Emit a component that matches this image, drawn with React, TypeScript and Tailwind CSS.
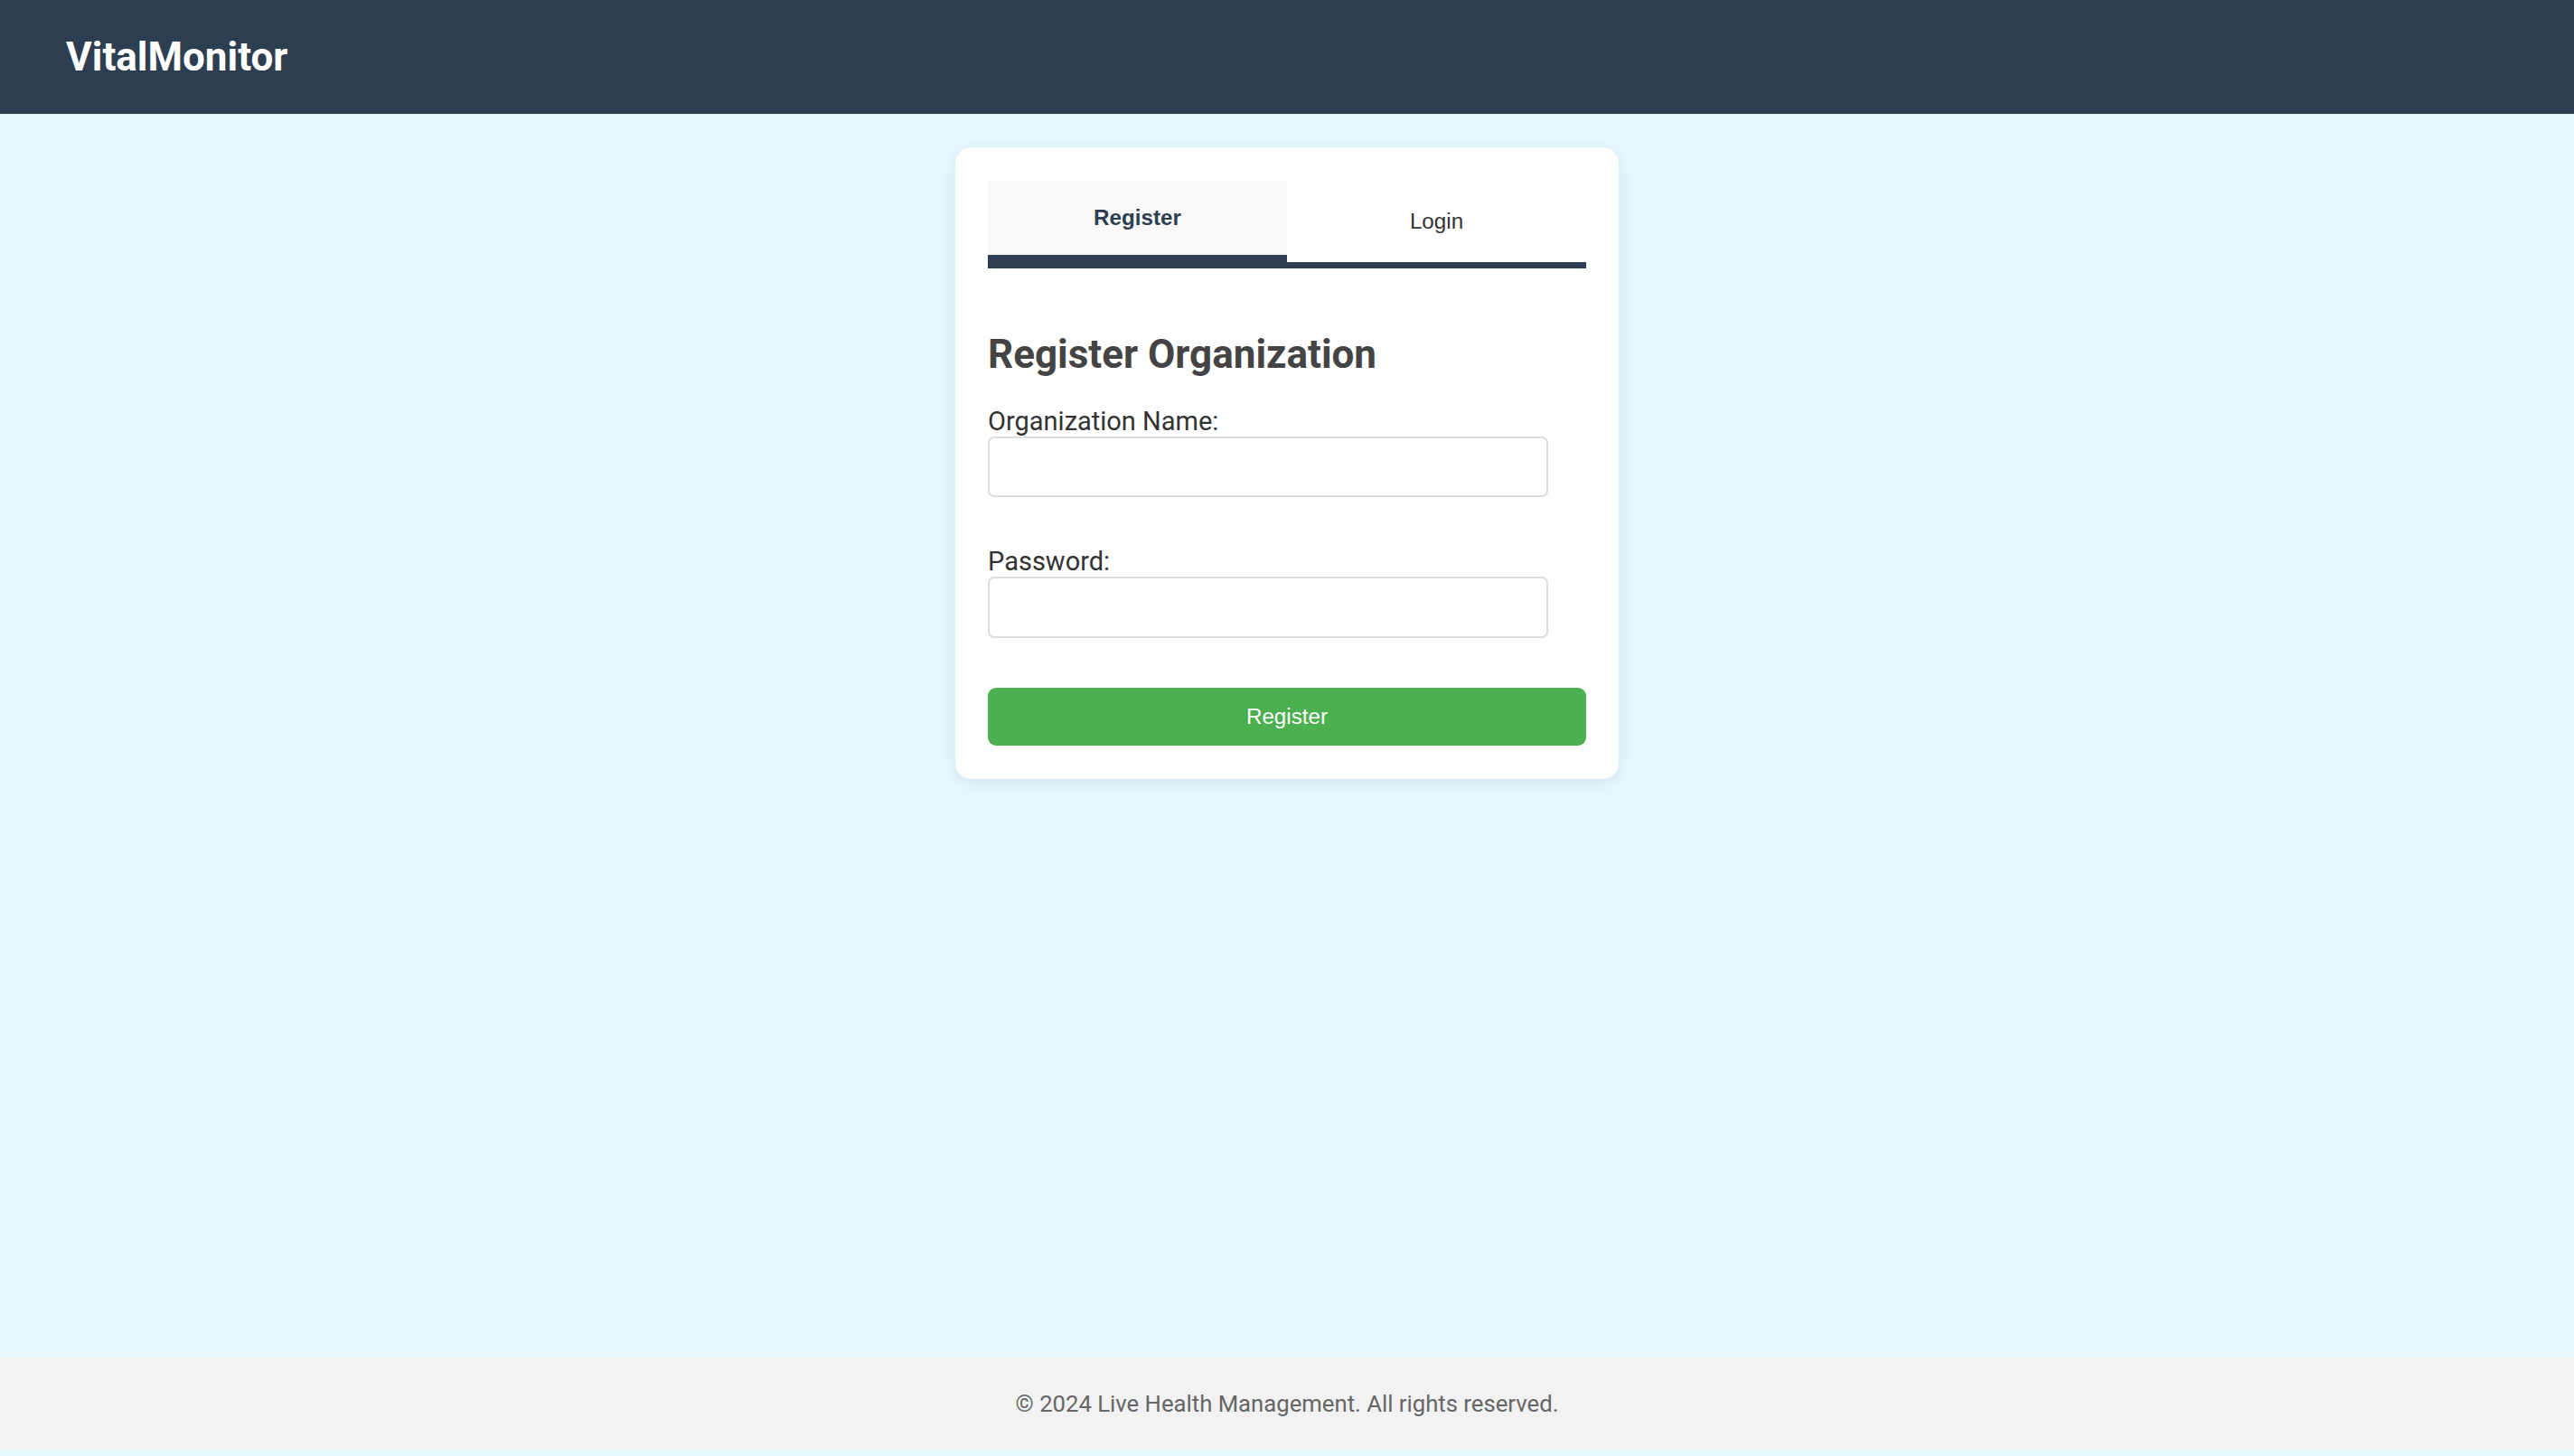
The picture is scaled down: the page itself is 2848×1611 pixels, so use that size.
import { useState } from "react";

type Tab = "register" | "login";

export default function App() {
  const [tab, setTab] = useState<Tab>("register");
  const [orgName, setOrgName] = useState("");
  const [password, setPassword] = useState("");

  return (
    <div className="flex flex-col h-[1611px] bg-[#e6f7ff] font-['Roboto',sans-serif]">
      {/* Header */}
      <header className="flex items-center h-[126px] px-[73px] bg-[#2c3e50] shrink-0">
        <h1 className="text-[44px] leading-[52px] font-bold text-white">VitalMonitor</h1>
      </header>

      {/* Main */}
      <main className="flex-1 flex justify-center pt-[37px]">
        <div className="w-[734px] h-fit bg-white rounded-[18px] px-[36px] pt-[37px] pb-[37px] shadow-[0_4px_20px_rgba(0,0,0,0.08)]">
          {/* Tabs */}
          <div className="flex border-b-[7px] border-[#2c3e50]">
            <button
              onClick={() => setTab("register")}
              className={
                tab === "register"
                  ? "flex-1 h-[90px] flex items-center justify-center bg-[#f9f9f9] border-b-[8px] border-[#2c3e50] font-['Liberation_Sans',Arial,sans-serif] text-[24.2px] font-bold text-[#2c3e50]"
                  : "flex-1 h-[90px] flex items-center justify-center bg-white font-['Liberation_Sans',Arial,sans-serif] text-[24.2px] text-[#333]"
              }
            >
              Register
            </button>
            <button
              onClick={() => setTab("login")}
              className={
                tab === "login"
                  ? "flex-1 h-[90px] flex items-center justify-center bg-[#f9f9f9] border-b-[8px] border-[#2c3e50] font-['Liberation_Sans',Arial,sans-serif] text-[24.2px] font-bold text-[#2c3e50]"
                  : "flex-1 h-[90px] flex items-center justify-center bg-white font-['Liberation_Sans',Arial,sans-serif] text-[24.2px] text-[#333]"
              }
            >
              Login
            </button>
          </div>

          {/* Form */}
          <h2 className="mt-[69px] mb-[31px] text-[44px] leading-[52px] font-bold text-[#444]">
            {tab === "register" ? "Register Organization" : "Login"}
          </h2>

          <label className="block text-[29px] leading-[34px] text-[#333]">Organization Name:</label>
          <input
            type="text"
            value={orgName}
            onChange={(e) => setOrgName(e.target.value)}
            className="block w-[620px] h-[67px] border-2 border-[#ddd] rounded-[7px] bg-white px-[18px] text-[29px] outline-none"
          />

          <label className="block mt-[54px] text-[29px] leading-[34px] text-[#333]">Password:</label>
          <input
            type="password"
            value={password}
            onChange={(e) => setPassword(e.target.value)}
            className="block w-[620px] h-[68px] border-2 border-[#ddd] rounded-[7px] bg-white px-[18px] text-[29px] outline-none"
          />

          <button className="mt-[55px] w-full h-[64px] rounded-[9px] bg-[#4caf50] text-white font-['Liberation_Sans',Arial,sans-serif] text-[24.2px]">
            {tab === "register" ? "Register" : "Login"}
          </button>
        </div>
      </main>

      {/* Footer */}
      <footer className="flex items-center justify-center h-[103px] mb-[6px] bg-[#f2f2f2] shrink-0">
        <p className="text-[25.7px] text-[#666]">© 2024 Live Health Management. All rights reserved.</p>
      </footer>
    </div>
  );
}
